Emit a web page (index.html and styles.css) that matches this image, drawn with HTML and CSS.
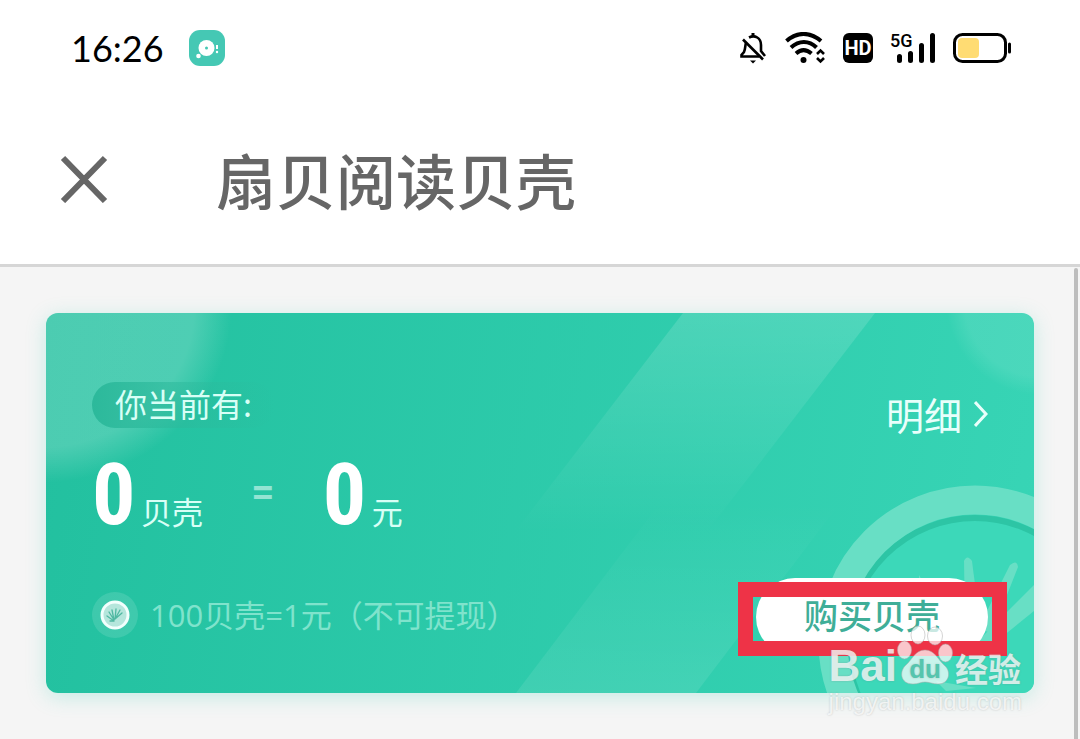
FILE: index.html
```html
<!DOCTYPE html>
<html lang="zh-CN">
<head>
<meta charset="utf-8">
<meta name="viewport" content="width=device-width, initial-scale=1">
<title>扇贝阅读贝壳</title>
<link rel="stylesheet" href="styles.css">
</head>
<body>
<div class="page">
  <div class="status">
    <div class="status-left">
      <span class="clock">16:26</span>
      <svg class="app-badge" width="36" height="36" viewBox="0 0 36 36" aria-hidden="true">
        <rect width="36" height="36" rx="11" fill="#45c8b4"/>
        <circle cx="17.500" cy="18" r="8" fill="#fff"/>
        <circle cx="17.500" cy="18" r="1.500" fill="#45c8b4"/>
        <circle cx="9.500" cy="26" r="2.300" fill="#fff"/>
        <path d="M28 15v4" stroke="#fff" stroke-width="2"/>
        <circle cx="28" cy="22" r="1.200" fill="#fff"/>
      </svg>
    </div>
    <div class="status-right">
      <svg width="28" height="32" viewBox="0 0 28 32" fill="none" stroke="#000" stroke-width="2.600" aria-hidden="true">
        <path d="M10 5.500C16 2.500 22 6 22 13v6l4 5M7 10.500C6 14 6.500 17 5 20l-2.500 3v1.500H20"/>
        <path d="M4 7.500 24 27.500"/>
        <path d="M14 1v4" stroke-width="3"/>
        <path d="M11 28.500h6l-3 3z" fill="#000" stroke="none"/>
      </svg>
      <svg width="40" height="32" viewBox="0 0 40 32" fill="none" stroke="#000" aria-hidden="true">
        <path d="M1.500 9C12-.5 25-.5 36 9M6 15.500c8-7.500 18-7.500 25.500 0M11 21.500c5-4.500 10-4.500 15.500 0" stroke-width="4"/>
        <circle cx="18.500" cy="28" r="3" fill="#000" stroke="none"/>
        <path d="m32 22 3.500-3.500L39 22M32 26l3.500 3.500L39 26" stroke-width="2.600"/>
      </svg>
      <span class="hd">HD</span>
      <span class="signal">
        <svg width="44" height="32" viewBox="0 0 44 32" stroke="#000" stroke-width="5" stroke-linecap="round" aria-hidden="true">
          <path d="M8.500 24.500v4M19.500 21.500v7M30.500 13.500v15M41.500 3.500v25"/>
        </svg>
        <span class="signal-type">5G</span>
      </span>
      <svg width="58" height="32" viewBox="0 0 58 32" aria-hidden="true">
        <rect x="1.500" y="2.500" width="51" height="27" rx="8" fill="#fff" stroke="#000" stroke-width="3"/>
        <rect x="5" y="6" width="21" height="20" rx="4" fill="#ffdc73"/>
        <path d="M56.500 12v8" stroke="#000" stroke-width="3" stroke-linecap="round"/>
      </svg>
    </div>
  </div>

  <header class="header">
    <button class="close" type="button" aria-label="关闭">
      <svg width="48" height="48" viewBox="0 0 48 48" stroke="#666" stroke-width="6" aria-hidden="true"><path d="m3 3 42 43M45 3 3 46"/></svg>
    </button>
    <h1 class="title">扇贝阅读贝壳</h1>
  </header>

  <main class="content">
    <section class="card">
      <svg class="card-art" viewBox="0 0 988 380" preserveAspectRatio="xMaxYMin slice" aria-hidden="true">
        <defs>
          <linearGradient id="beam" x1="0" y1="0" x2="0" y2="1">
            <stop offset="0" stop-color="#fff" stop-opacity=".14"/>
            <stop offset="1" stop-color="#fff" stop-opacity="0"/>
          </linearGradient>
          <linearGradient id="beam-low" x1="0" y1="1" x2="0" y2="0">
            <stop offset="0" stop-color="#fff" stop-opacity=".09"/>
            <stop offset="1" stop-color="#fff" stop-opacity="0"/>
          </linearGradient>
          <radialGradient id="glow">
            <stop offset=".8" stop-color="#fff" stop-opacity=".19"/>
            <stop offset="1" stop-color="#fff" stop-opacity="0"/>
          </radialGradient>
          <radialGradient id="corner">
            <stop offset=".8" stop-color="#fff" stop-opacity=".1"/>
            <stop offset="1" stop-color="#fff" stop-opacity="0"/>
          </radialGradient>
        </defs>
        <ellipse cx="-6" cy="-6" rx="192" ry="176" fill="url(#glow)"/>
        <path d="M637 0h192L660 220H468z" fill="url(#beam)"/>
        <path d="M470 380 614 190h180L650 380z" fill="url(#beam-low)"/>
        <ellipse cx="994" cy="-12" rx="94" ry="94" fill="url(#corner)"/>
        <circle cx="929" cy="329" r="127" fill="#3cd8b9"/>
        <circle cx="929" cy="332" r="127" fill="none" stroke="#2dc5a5" stroke-width="6"/>
        <circle cx="929" cy="329" r="142" fill="none" stroke="#68dfc5" stroke-width="29"/>
        <g fill="#68dfc5">
          <path d="M926 248q-5-7-8 0l1 55h14z"/>
          <path d="M964 252q7-6 8 2l-26 66-14-4z"/>
          <path d="m988 272-58 58 6 10 52-42z"/>
          <path d="m873 262 22 40-8 5-14-42z"/>
          <path d="m890 368 40 7-30 3z"/>
        </g>
      </svg>

      <div class="card-main">
        <p class="label">你当前有:</p>
        <div class="balance">
          <span class="amount">0</span><span class="unit">贝壳</span>
          <span class="equals">=</span>
          <span class="amount">0</span><span class="unit">元</span>
        </div>
        <p class="rate">
          <svg width="46" height="46" viewBox="0 0 46 46" aria-hidden="true">
            <circle cx="23" cy="23" r="23" fill="#fff" fill-opacity=".12"/>
            <circle cx="23" cy="23" r="13" fill="#b5e6dc" stroke="#f2fffd" stroke-width="3"/>
            <path d="m22 29-7-5M22 28l-5-8M22 28l-2-10M23 27l1-10M23 27l5-9M23 27l7-6M22 29h-4" fill="none" stroke="#50b8a2" stroke-width="1.300" stroke-linecap="round"/>
          </svg>
          <span>100贝壳=1元（不可提现）</span>
        </p>
      </div>

      <div class="card-side">
        <a class="detail" href="#">明细
          <svg width="14" height="28" viewBox="0 0 14 28" fill="none" stroke="#e8fffb" stroke-width="3" aria-hidden="true"><path d="m1 2 11 12L1 26"/></svg>
        </a>
        <div class="buy-wrap">
          <button class="buy" type="button">购买贝壳</button>
          <div class="highlight"></div>
          <div class="watermark">
            <div class="wm-logo">
              <span class="wm-latin">Bai</span>
              <span class="wm-paw">
                <svg width="56" height="60" viewBox="0 0 56 60" aria-hidden="true">
                  <g fill="#fff" fill-opacity=".72" stroke="#aaa" stroke-opacity=".5">
                    <ellipse cx="7.500" cy="25" rx="7" ry="9"/>
                    <ellipse cx="21" cy="10" rx="7" ry="9"/>
                    <ellipse cx="38" cy="11" rx="7.500" ry="9"/>
                    <ellipse cx="48.500" cy="28" rx="7" ry="9"/>
                    <path d="M28 25c-10 0-13 10-19 15-7 6-6 19 7 19 5 0 8-2 12-2s8 2 13 2c12 0 13-13 7-18-7-6-10-16-20-16z"/>
                  </g>
                </svg>
                <span class="wm-du">du</span>
              </span>
              <span class="wm-cn">经验</span>
            </div>
            <div class="wm-url">jingyan.baidu.com</div>
          </div>
        </div>
      </div>
    </section>
    <div class="scrollbar"></div>
  </main>
</div>
</body>
</html>
```
FILE: styles.css
```css
* { box-sizing: border-box; }

body {
  margin: 0;
  background: #f5f5f5;
  font-family: "Noto Sans CJK SC", sans-serif;
}

h1, p { margin: 0; }
svg { display: block; flex: none; }

button {
  border: 0;
  padding: 0;
  font: inherit;
  cursor: pointer;
}

.page {
  display: flex;
  flex-direction: column;
  min-height: 100vh;
}

.status {
  display: flex;
  justify-content: space-between;
  align-items: center;
  height: 96px;
  padding: 0 69px 0 71px;
  background: #fff;
}

.status-left {
  display: flex;
  align-items: center;
  gap: 25px;
}

.clock {
  font: 36px/48px Lato, sans-serif;
  color: #000;
}

.status-right {
  display: flex;
  align-items: center;
  gap: 18px;
}

.hd {
  width: 30px;
  border-radius: 6px;
  background: #000;
  color: #fff;
  font: bold 20px/30px Roboto, sans-serif;
  text-align: center;
}

.signal { position: relative; }

.signal-type {
  position: absolute;
  left: -1px;
  top: 0;
  font: 500 18px/18px Roboto, sans-serif;
}

.header {
  display: flex;
  align-items: center;
  gap: 108px;
  height: 171px;
  padding: 0 60px 2px;
  border-bottom: 3px solid #d6d6d6;
  background: #fff;
}

.close { background: none; }

.title {
  font-size: 60px;
  font-weight: 500;
  line-height: 80px;
  color: #666;
}

.content {
  position: relative;
  flex: 1;
  padding: 46px;
}

.scrollbar {
  position: absolute;
  top: 1px;
  right: 2px;
  bottom: 0;
  width: 4px;
  border-radius: 2px 2px 0 0;
  background: #bdbdbd;
}

.card {
  position: relative;
  display: flex;
  justify-content: space-between;
  padding: 69px 46px 37px;
  border-radius: 12px;
  background: linear-gradient(100deg, #22c09f, #38d5b6);
  box-shadow: 0 4px 20px rgba(56, 213, 182, .25);
}

.card-art {
  position: absolute;
  inset: 0;
  width: 100%;
  height: 100%;
  border-radius: 12px;
}

.card-main,
.card-side {
  position: relative;
  display: flex;
  flex-direction: column;
  justify-content: space-between;
}

.card-main { padding-bottom: 18px; }
.card-side { align-items: flex-end; }

.label {
  align-self: flex-start;
  padding: 0 23px 4px;
  border-radius: 24px;
  background: linear-gradient(90deg, #2cb99b, rgba(44, 185, 155, 0));
  color: #d8fff6;
  font-size: 32px;
  line-height: 42px;
}

.balance {
  display: flex;
  align-items: baseline;
  height: 164px;
  color: #d8fff6;
  line-height: 134px;
}

.amount {
  width: 36px;
  color: #fff;
  font-family: "Roboto Condensed", "Liberation Sans Narrow", sans-serif;
  font-size: 86px;
  font-weight: 700;
  text-align: center;
}

.unit {
  margin-left: 13px;
  font-size: 31px;
}

.equals {
  margin: 0 48px;
  color: #93e4d3;
  font: 500 42px/128px Roboto, sans-serif;
  align-self: flex-start;
}

.rate {
  display: flex;
  align-items: center;
  gap: 12px;
  color: #7fe3cc;
  font-family: "Open Sans", "Noto Sans CJK SC", sans-serif;
  font-size: 31px;
  line-height: 46px;
}

.detail {
  display: flex;
  align-items: center;
  gap: 12px;
  color: #e8fffb;
  font-size: 38px;
  line-height: 64px;
  text-decoration: none;
}

.buy-wrap { position: relative; }

.buy {
  width: 232px;
  height: 78px;
  padding-bottom: 4px;
  border-radius: 39px;
  background: #fff;
  color: #3fae98;
  font-size: 34px;
  font-weight: 500;
  line-height: 74px;
}

.highlight {
  position: absolute;
  inset: 4px -19px 0 -18px;
  border: 15px solid #ee3347;
}

.watermark {
  position: absolute;
  top: 47px;
  right: -34px;
  color: rgba(255, 255, 255, .75);
  white-space: nowrap;
  text-shadow: 0 0 2px rgba(120, 120, 120, .4);
}

.wm-logo {
  display: flex;
  align-items: flex-end;
}

.wm-latin { font: bold 44px/38px "Liberation Sans", sans-serif; }
.wm-paw { position: relative; }

.wm-du {
  position: absolute;
  inset: auto 0 3px;
  color: #55c5ae;
  font: bold 26px/26px "Liberation Sans", sans-serif;
  text-align: center;
}

.wm-cn {
  margin-left: 2px;
  font-size: 33px;
  font-weight: 700;
  line-height: 34px;
}

.wm-url {
  padding-top: 4px;
  font: 24px/26px "Liberation Sans", sans-serif;
}
```
